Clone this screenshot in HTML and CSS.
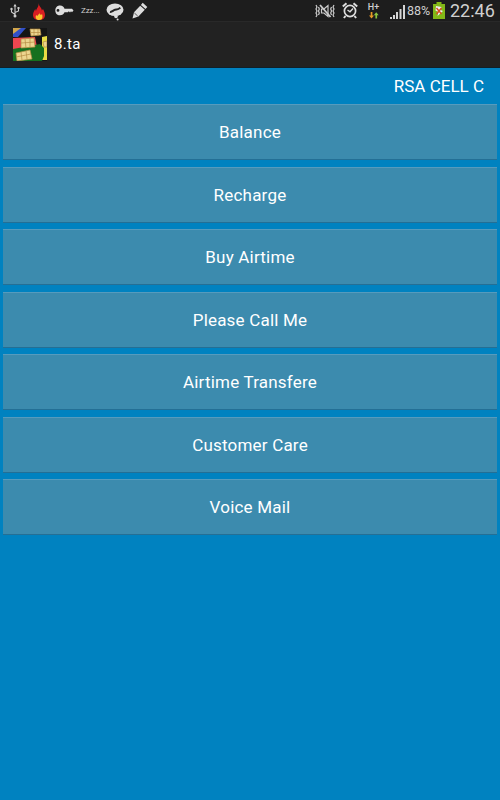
FILE: index.html
```html
<!DOCTYPE html>
<html lang="en">
<head>
<meta charset="utf-8">
<title>8.ta</title>
<link rel="stylesheet" href="styles.css">
</head>
<body>
<header class="status">
  <div class="notifications">
    <svg class="usb" width="10" height="16" viewBox="0 0 10 16" fill="none" stroke="#ccc" stroke-width="1.1"><path d="M5 2v11M5 11.5L1.5 9V6M5 9.5L8.5 8V5"/><path d="M3.4 3.5L5 .8l1.6 2.7zM7.5 4h2v2h-2z" fill="#ccc" stroke="none"/><circle cx="1.5" cy="6" r="1.2" fill="#ccc" stroke="none"/><circle cx="5" cy="13" r="1.5" fill="#ccc" stroke="none"/></svg>
    <svg class="flame" width="12" height="17" viewBox="0 0 12 17"><path d="M5.6 0C6 4 9 4.500 8.800 7.500L10 6c1 2 2 4 2 6 0 3-2 5-6 5s-6-2-6-5c0-2 1-4 2.300-6L3 8.200C3.400 5 6 4 5.600 0z" fill="#d91f22"/><path d="M6.300 9.500c0 2 1 1.500 1.700 2.500l1-1c1 3 .6 6-2.900 6-3.300 0-4-2.500-3-5l1.200 1c.6-1.200 2-1.600 2-3.500z" fill="#fbc52d"/></svg>
    <svg class="key" width="19" height="11" viewBox="0 0 19 11"><path fill="#ddd" fill-rule="evenodd" d="M5 .5c2.500 0 4 1.500 4.500 3.300H17l1.500 1.700L17 7.200l-1-.9-1 1.200-1.200-1.200-1 1H9.500C8.800 9.200 7.300 10.300 5 10.300 2 10.300.3 8 .3 5.400S2 .5 5 .5zM3 4a1.400 1.400 0 1 0 0 2.800A1.400 1.400 0 0 0 3 4z"/></svg>
    <span class="zzz">Zzz...</span>
    <svg class="bubble" width="18" height="18" viewBox="0 0 18 18"><ellipse cx="9" cy="6.800" rx="8.500" ry="6.300" fill="#ddd"/><circle cx="10" cy="13.500" r="1.800" fill="#ddd"/><circle cx="11.600" cy="16.600" r="1" fill="#ddd"/><path d="M4 8.800c2 .6 3-1.500 5-2s3 .2 5.300-2.200" fill="none" stroke="#222" stroke-width="2"/></svg>
    <svg class="pencil" width="16" height="17" viewBox="0 0 16 17" fill="#ddd"><path d="M10.700.8L15.300 4.900 13.500 7 8.900 2.900zM8.200 3.700L12.800 7.800 6.400 14.500.5 16.500 2 10.200z"/><path d="M2.400 11l3.300 3" stroke="#333" stroke-width=".8"/></svg>
  </div>
  <div class="system">
    <svg class="mute" width="20" height="16" viewBox="0 0 20 16" fill="none" stroke="#ccc" stroke-width="1.200"><path d="M1 2l1 2-1 2 1 2-1 2 1 2-1 2M3.500 4l.8 2-.8 2 .8 2-.8 2M19 2l-1 2 1 2-1 2 1 2-1 2 1 2M16.500 4l-.8 2 .8 2-.8 2 .8 2"/><path d="M6.500 6H9l4-3.500v11L9 10H6.500z"/><path d="M5 2l10.500 12" stroke-width="1.800"/></svg>
    <svg class="alarm" width="16" height="17" viewBox="0 0 16 17" fill="none" stroke="#ddd"><circle cx="8" cy="9" r="5.600" stroke-width="1.700"/><path d="M.8 4.500L4.500 1.300M15.200 4.500L11.500 1.300M3.500 14l-1.600 2M12.500 14l1.600 2" stroke-width="2"/><path d="M5.500 8L8 9.800 11 6.500" stroke-width="1.400"/></svg>
    <div class="data">
      <span>H+</span>
      <svg width="10" height="7" viewBox="0 0 10 7"><path d="M1.700 0h1.700v3.500H5L2.500 6.500 0 3.500h1.700z" fill="#e99a25"/><path d="M7.200.3L9.700 3.200H8.100v3.300H6.400V3.200H4.800z" fill="#8cc63f"/></svg>
    </div>
    <svg class="signal" width="15" height="14" viewBox="0 0 15 14" fill="#d5d5d5"><path d="M0 12h2v2H0zM3 10h2v4H3zM6 7h2v7H6zM9.500 4h2v10h-2zM13 0h2v14h-2z"/></svg>
    <span class="percent">88%</span>
    <svg class="battery" width="12" height="17" viewBox="0 0 12 17"><path d="M3.500 0h5v2H12v15H0V2h3.500z" fill="#83b817"/><path d="M3 4l5.500 1-1 3L10 9l-5.500 5 1-4L2.500 8.500z" fill="#eee"/><path d="M3.500 6l5 6M8.500 6l-5 6" stroke="#d94b20" stroke-width="1.400"/></svg>
    <span class="clock">22:46</span>
  </div>
</header>
<div class="titlebar">
  <svg class="logo" width="34" height="33" viewBox="0 0 34 33">
    <path fill="#151515" d="M0 0h34v33H0z"/><path fill="#d1a64d" d="M0 0h12L0 7z"/><path fill="#3150c8" d="M8 0h5L5 9H0V6z"/>
    <path fill="#ed4650" d="M0 10l22-1 2 10-24 3z"/><path fill="#e8dc45" d="M29 9l5-1v24h-5z"/><path fill="#16701f" d="M0 21l27-5 4 4v8l-2 5H0z"/>
    <g fill="#ecd58f" stroke="#b48d43" stroke-width=".7"><path d="M17 1h10l1 6-10 1zM17 4.500h11M21 1v7M25 1v7"/><path d="M8 11l13-1 1 9-14 1zM8 15l14-1M12 11l1 9M17 10v9"/><path d="M3 25l14-3 2 9-15 2zM3 29l15-3M8 24l1 8M13 23l1 8M30 14l4-1v6h-3z"/></g>
  </svg>
  <h1>8.ta</h1>
</div>
<main>
  <div class="carrier">RSA CELL C</div>
  <div class="menu">
    <button>Balance</button>
    <button>Recharge</button>
    <button>Buy Airtime</button>
    <button>Please Call Me</button>
    <button>Airtime Transfere</button>
    <button>Customer Care</button>
    <button>Voice Mail</button>
  </div>
</main>
</body>
</html>
```
FILE: styles.css
```css
* { box-sizing: border-box; }
body {
  margin: 0;
  height: 800px;
  display: flex;
  flex-direction: column;
  overflow: hidden;
  background: #0082c0;
  color: #fff;
  font-family: Roboto, "Liberation Sans", sans-serif;
}
svg { display: block; flex: none; }
.status {
  height: 21px;
  flex: none;
  display: flex;
  justify-content: space-between;
  background: #1d1d1d;
  color: #d0d0d0;
}
.notifications, .system { display: flex; align-items: center; height: 21px; }
.notifications { padding-left: 10px; }
.flame { margin: 2px 0 0 13px; }
.key { margin-left: 10px; }
.zzz { width: 18px; margin-left: 7px; font-size: 8px; line-height: 12px; letter-spacing: -.1px; }
.bubble { margin: 2px 0 0 7px; }
.pencil { margin-left: 8px; }
.system { padding-right: 6px; }
.alarm { margin-left: 7px; }
.data {
  width: 13px;
  margin-left: 9px;
  display: flex;
  flex-direction: column;
  align-items: center;
  font-size: 9px;
  line-height: 10px;
  font-weight: 500;
}
.signal { margin: 2px 0 0 10px; }
.percent { width: 26px; margin-left: 2px; font-size: 12.5px; white-space: nowrap; }
.battery { margin-left: 0; }
.clock { width: 44px; margin-left: 5px; font-size: 18px; line-height: 21px; white-space: nowrap; }
.titlebar {
  height: 47px;
  flex: none;
  display: flex;
  align-items: center;
  padding: 0 0 1px 13px;
  border-top: 1px solid #292929;
  border-bottom: 1px solid #10202a;
  background: #222;
}
h1 { margin: 0 0 0 7px; font-size: 15px; line-height: 20px; font-weight: 400; letter-spacing: .3px; }
.carrier { height: 36px; padding-right: 16px; font-size: 17px; line-height: 37px; text-align: right; }
.menu { display: flex; flex-direction: column; gap: 6.5px; padding: 0 3px; }
button {
  height: 56px;
  padding: 0 0 0;
  border: 0;
  border-top: 1px solid #569bbd;
  border-bottom: 1px solid #246f95;
  background: #3c8bae;
  color: #fff;
  font: 17px/54px Roboto, "Liberation Sans", sans-serif;
  letter-spacing: .2px;
}
```
